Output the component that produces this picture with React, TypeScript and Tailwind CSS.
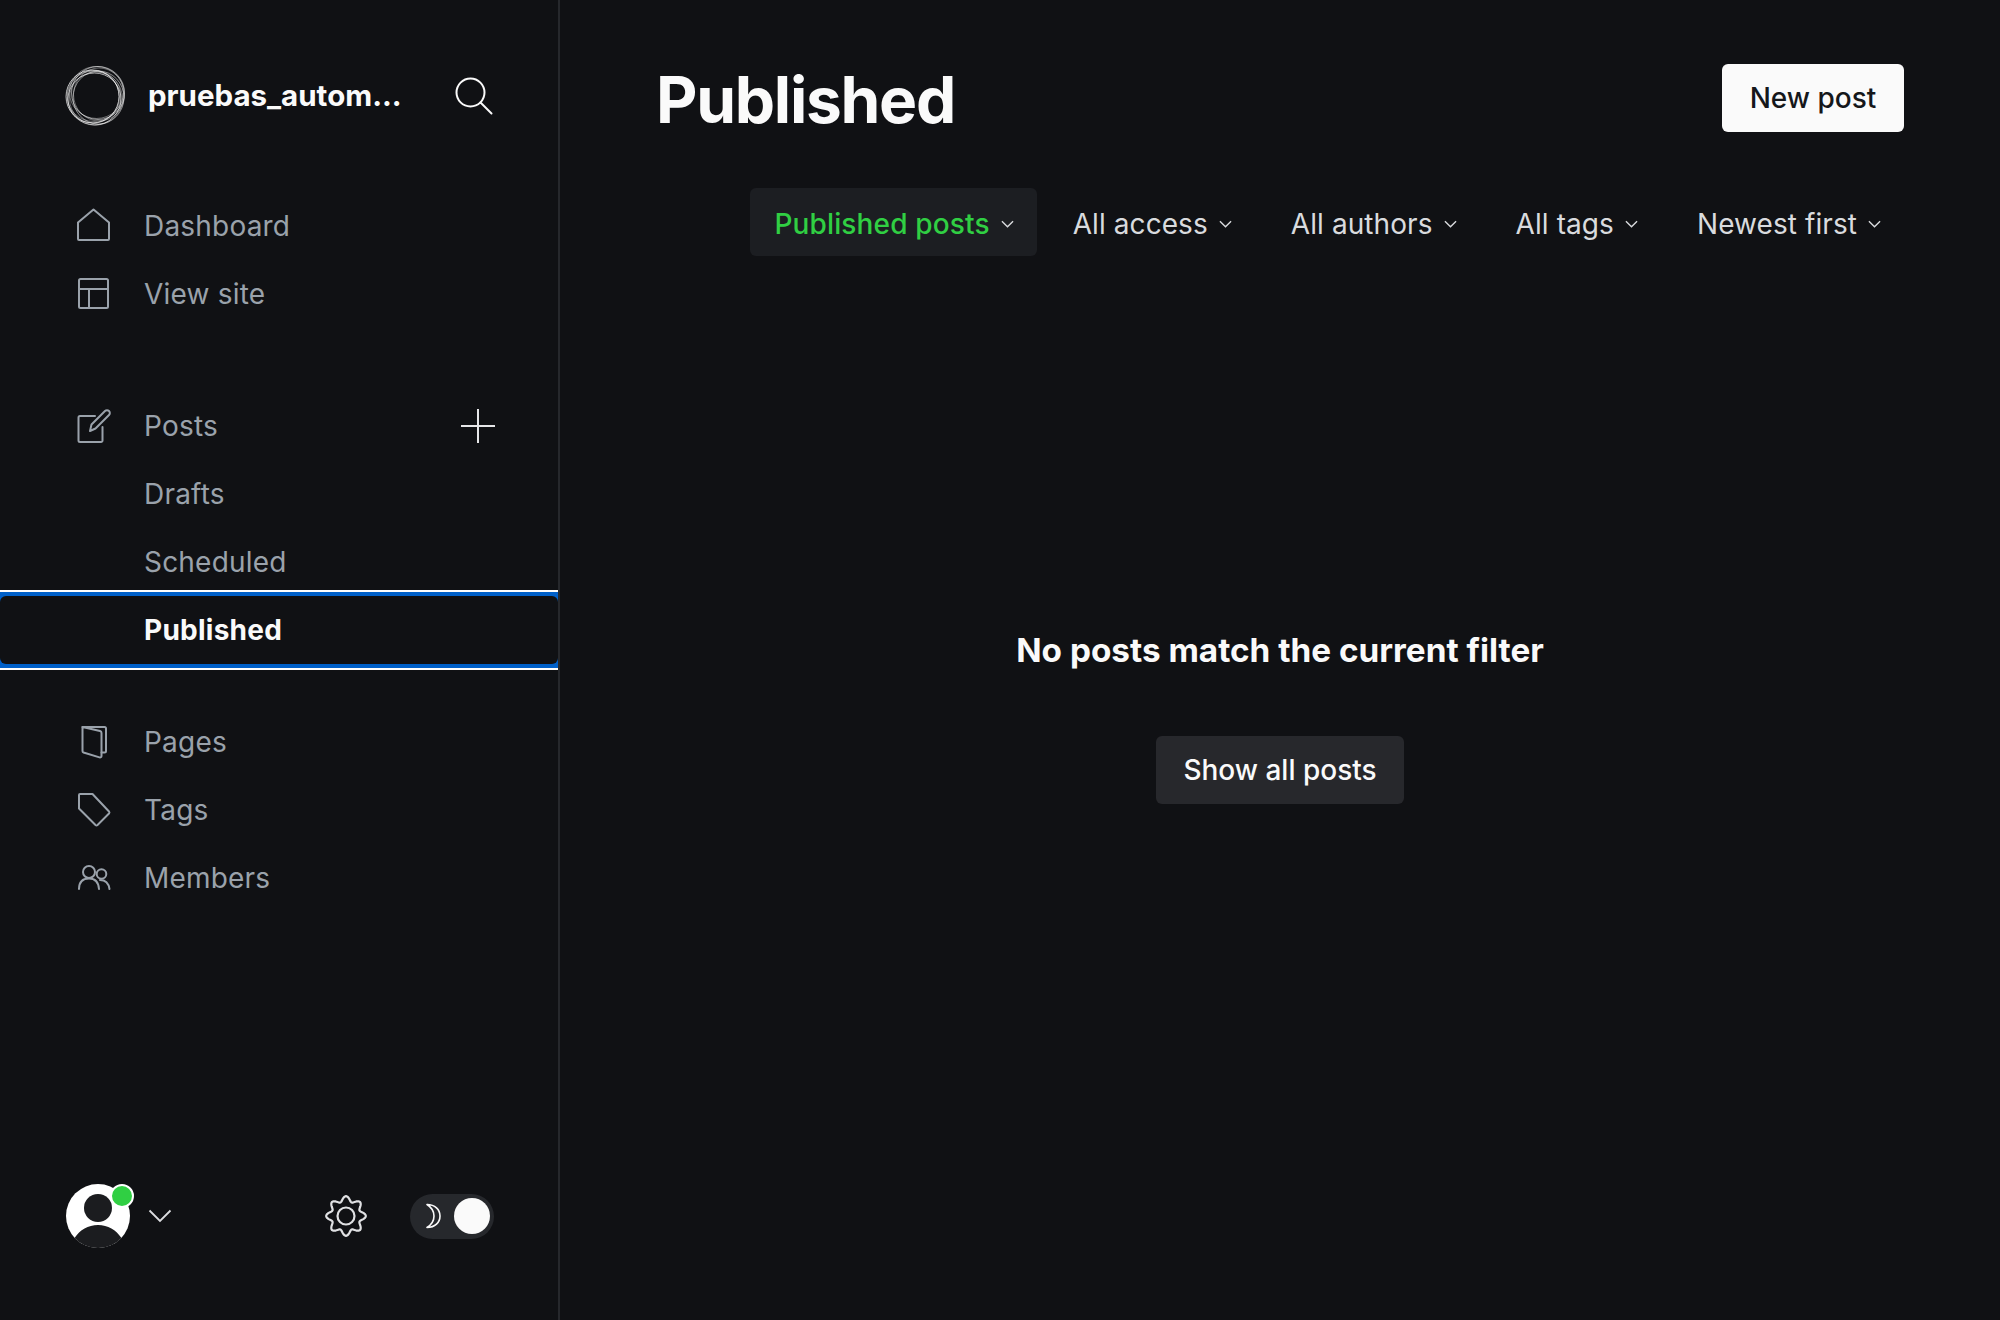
import type { ReactNode } from 'react';

function NavIcon({ children }: { children: ReactNode }) {
  return (
    <svg width="36" height="36" viewBox="0 0 36 36" fill="none" stroke="currentColor" strokeWidth="2" strokeLinejoin="round" strokeLinecap="round" className="shrink-0">
      {children}
    </svg>
  );
}

function Chevron() {
  return (
    <svg width="13" height="8" viewBox="0 0 14 8" fill="none" stroke="currentColor" strokeWidth="1.5" className="shrink-0 text-[#d9dbde]">
      <path d="M1 1l6 6 6-6" />
    </svg>
  );
}

function Logo() {
  // loose ring: same-ish circles pushed off centre so the band bulges unevenly
  const rings = [
    { x: 33, y: 27, rx: 26.5, ry: 26.5, o: 0.55 },
    { x: 34, y: 28.5, rx: 25.5, ry: 26.5, o: 0.35 },
    { x: 31.5, y: 26.5, rx: 27, ry: 26, o: 0.4 },
    { x: 27.5, y: 30.5, rx: 26.5, ry: 26.5, o: 0.7 },
    { x: 28.5, y: 31, rx: 26, ry: 26, o: 0.4 },
    { x: 29, y: 30, rx: 27, ry: 25.5, o: 0.35 },
    { x: 29.5, y: 33, rx: 26.5, ry: 26, o: 0.65 },
    { x: 31, y: 32.5, rx: 26.5, ry: 26.5, o: 0.35 },
    { x: 33.5, y: 31.5, rx: 25.5, ry: 26.5, o: 0.5 },
  ];
  return (
    <svg width="60" height="60" viewBox="0 0 60 60" fill="none" className="shrink-0">
      {rings.map((r, i) => (
        <ellipse key={i} cx={r.x} cy={r.y} rx={r.rx} ry={r.ry} stroke="#fff" strokeOpacity={r.o} strokeWidth="1" />
      ))}
    </svg>
  );
}

function gearPath() {
  const pts: string[] = [];
  for (let i = 0; i < 160; i++) {
    const a = (i / 160) * Math.PI * 2 + Math.PI / 8;
    const r = 17.2 + 2.6 * Math.cos(8 * a);
    pts.push(`${(21 + r * Math.cos(a)).toFixed(2)} ${(21 + r * Math.sin(a)).toFixed(2)}`);
  }
  return `M${pts.join('L')}Z`;
}

function NavRow({ label, icon, extra }: { label: string; icon?: ReactNode; extra?: ReactNode }) {
  return (
    <div className="flex h-[68px] items-center pl-[76px] pr-[64px] text-[#9aa2ab]">
      <div className="flex w-[68px] shrink-0 items-center">{icon}</div>
      <span className="flex-1 text-[28px] tracking-[0.2px]">{label}</span>
      {extra}
    </div>
  );
}

const filters = ['All access', 'All authors', 'All tags', 'Newest first'];

export default function App() {
  return (
    <div className="flex h-screen overflow-hidden bg-[#101114] [font-family:Inter,sans-serif]">
      <aside className="flex w-[560px] shrink-0 flex-col overflow-x-clip border-r-2 border-[#26282c]">
        <div className="mt-[66px] flex h-[60px] items-center pl-[65px] pr-[65px]">
          <Logo />
          <span className="ml-[23px] whitespace-nowrap text-[29.5px] font-bold leading-none text-[#fafafa]">pruebas_autom...</span>
          <svg width="38" height="38" viewBox="0 0 38 38" fill="none" stroke="#fafafa" strokeWidth="2" className="ml-auto shrink-0" strokeLinecap="round">
            <circle cx="15.5" cy="15.5" r="14" />
            <path d="M25.5 25.5l11 11" />
          </svg>
        </div>

        <nav className="mt-[66px]">
          <NavRow label="Dashboard" icon={<NavIcon><path d="M2 14.5L17.5 1.5 33 14.5V31a1 1 0 01-1 1H3a1 1 0 01-1-1z" /></NavIcon>} />
          <NavRow label="View site" icon={<NavIcon><rect x="3" y="3" width="29" height="29" rx="1.5" /><path d="M3 13h29M13 13v19" /></NavIcon>} />
        </nav>

        <nav className="mt-[64px]">
          <NavRow
            label="Posts"
            icon={<NavIcon><path d="M19 8H4a1.500 1.500 0 00-1.500 1.500v23A1.500 1.500 0 004 34h21a1.500 1.500 0 001.500-1.500V19" /><path d="M14 23l1.500-6.500L29 3a2.800 2.800 0 014 4L19.500 20.500z" /></NavIcon>}
            extra={
              <svg width="34" height="34" viewBox="0 0 34 34" stroke="#e6e7e9" strokeWidth="2" className="-mr-[1px] shrink-0">
                <path d="M17 0v34M0 17h34" />
              </svg>
            }
          />
          <NavRow label="Drafts" />
          <NavRow label="Scheduled" />
          <div className="relative z-10 -my-[6px] border-y-2 border-white bg-[#0060c9] py-[4px]">
            <div className="flex h-[68px] items-center rounded-[6px] bg-[#101114] pl-[144px] text-[28px] font-bold tracking-[0.25px] text-[#fafafa]">
              Published
            </div>
          </div>
        </nav>

        <nav className="mt-[44px]">
          <NavRow label="Pages" icon={<NavIcon><path d="M6.500 3h22a1.500 1.500 0 011.500 1.500V27a1.500 1.500 0 01-1.500 1.500h-3" /><path d="M6.500 3l17.500 4a2 2 0 011.500 2v23a1.500 1.500 0 01-2 1.400L7.500 28.500A1.500 1.500 0 016.500 27z" /></NavIcon>} />
          <NavRow label="Tags" icon={<NavIcon><path d="M4 2h12.500L33 19.500a1.500 1.500 0 010 2L21.500 33a1.500 1.500 0 01-2 0L3 16.500V3a1 1 0 011-1z" /></NavIcon>} />
          <NavRow label="Members" icon={<NavIcon><circle cx="13" cy="12" r="6" /><circle cx="25.500" cy="14" r="4.800" /><path d="M3 29c0-7 4-10.500 10-10.500S22.500 22 23 29M24 20c5 0 8.500 2.500 9.500 9" /></NavIcon>} />
        </nav>

        <div className="mb-[72px] mt-auto flex h-[64px] items-center pl-[66px]">
          <div className="relative h-[64px] w-[64px] shrink-0">
            <svg width="64" height="64" viewBox="0 0 64 64">
              <circle cx="32" cy="32" r="32" fill="#ffffff" />
              <circle cx="32" cy="24" r="14" fill="#1b1c1f" />
              <path d="M8.500 54C14 46 22 41 32 41s18 5 23.500 13A32 32 0 0132 64 32 32 0 018.500 54z" fill="#1b1c1f" />
            </svg>
            <span className="absolute left-[44px] top-[0px] h-[24px] w-[24px] rounded-full border-2 border-white bg-[#30cf43]" />
          </div>
          <svg width="24" height="14" viewBox="0 0 24 14" fill="none" stroke="#dcdde0" strokeWidth="1.8" className="ml-[18px] shrink-0">
            <path d="M1.500 1.500L12 12 22.500 1.500" />
          </svg>
          <svg width="42" height="42" viewBox="0 0 42 42" fill="none" stroke="#e0e1e3" strokeWidth="2.2" className="ml-[153px] shrink-0">
            <path d={gearPath()} strokeLinejoin="round" />
            <circle cx="21" cy="21" r="8.500" />
          </svg>
          <div className="ml-[43px] flex h-[45px] w-[84px] shrink-0 items-center justify-between rounded-full bg-[#26282c] pl-[15px] pr-[4px]">
            <svg width="20" height="26" viewBox="0 0 20 26" fill="none" stroke="#fafafa" strokeWidth="1.6" strokeLinejoin="round">
              <path d="M2 1.500c8 0 13 5 13 11.500s-5 11.500-13 11.500c4-2.500 7-6.500 7-11.500S6 4 2 1.500z" />
            </svg>
            <span className="h-[36px] w-[36px] rounded-full bg-[#fafafa]" />
          </div>
        </div>
      </aside>

      <main className="flex min-w-0 flex-1 flex-col px-[96px] pt-[64px]">
        <div className="flex h-[68px] items-center justify-between">
          <h1 className="pt-[4px] text-[64px] font-bold leading-none tracking-[-0.02em] text-[#fafafa]">Published</h1>
          <button className="flex h-[68px] w-[182px] items-center justify-center rounded-[6px] bg-[#fafafa] text-[28px] font-medium text-[#15171a]">New post</button>
        </div>

        <div className="mt-[56px] flex items-center justify-end gap-[12px]">
          <div className="flex h-[68px] items-center gap-[11px] rounded-[6px] bg-[#1c1e22] pl-[24px] pr-[23px] pt-[3px] text-[28px] font-medium tracking-[0.15px] text-[#30cf43]">
            Published posts
            <Chevron />
          </div>
          {filters.map((f) => (
            <div key={f} className="flex h-[68px] items-center gap-[11px] pl-[24px] pr-[23px] pt-[3px] text-[28px] tracking-[0.08px] text-[#d9dbde]">
              {f}
              <Chevron />
            </div>
          ))}
        </div>

        <div className="mt-[370px] flex flex-col items-center">
          <h2 className="text-[33.3px] font-bold leading-[48px] text-[#fafafa]">No posts match the current filter</h2>
          <button className="mt-[62px] flex h-[68px] w-[248px] items-center justify-center rounded-[6px] bg-[#27282c] text-[28px] font-medium text-[#fafafa]">Show all posts</button>
        </div>
      </main>
    </div>
  );
}
